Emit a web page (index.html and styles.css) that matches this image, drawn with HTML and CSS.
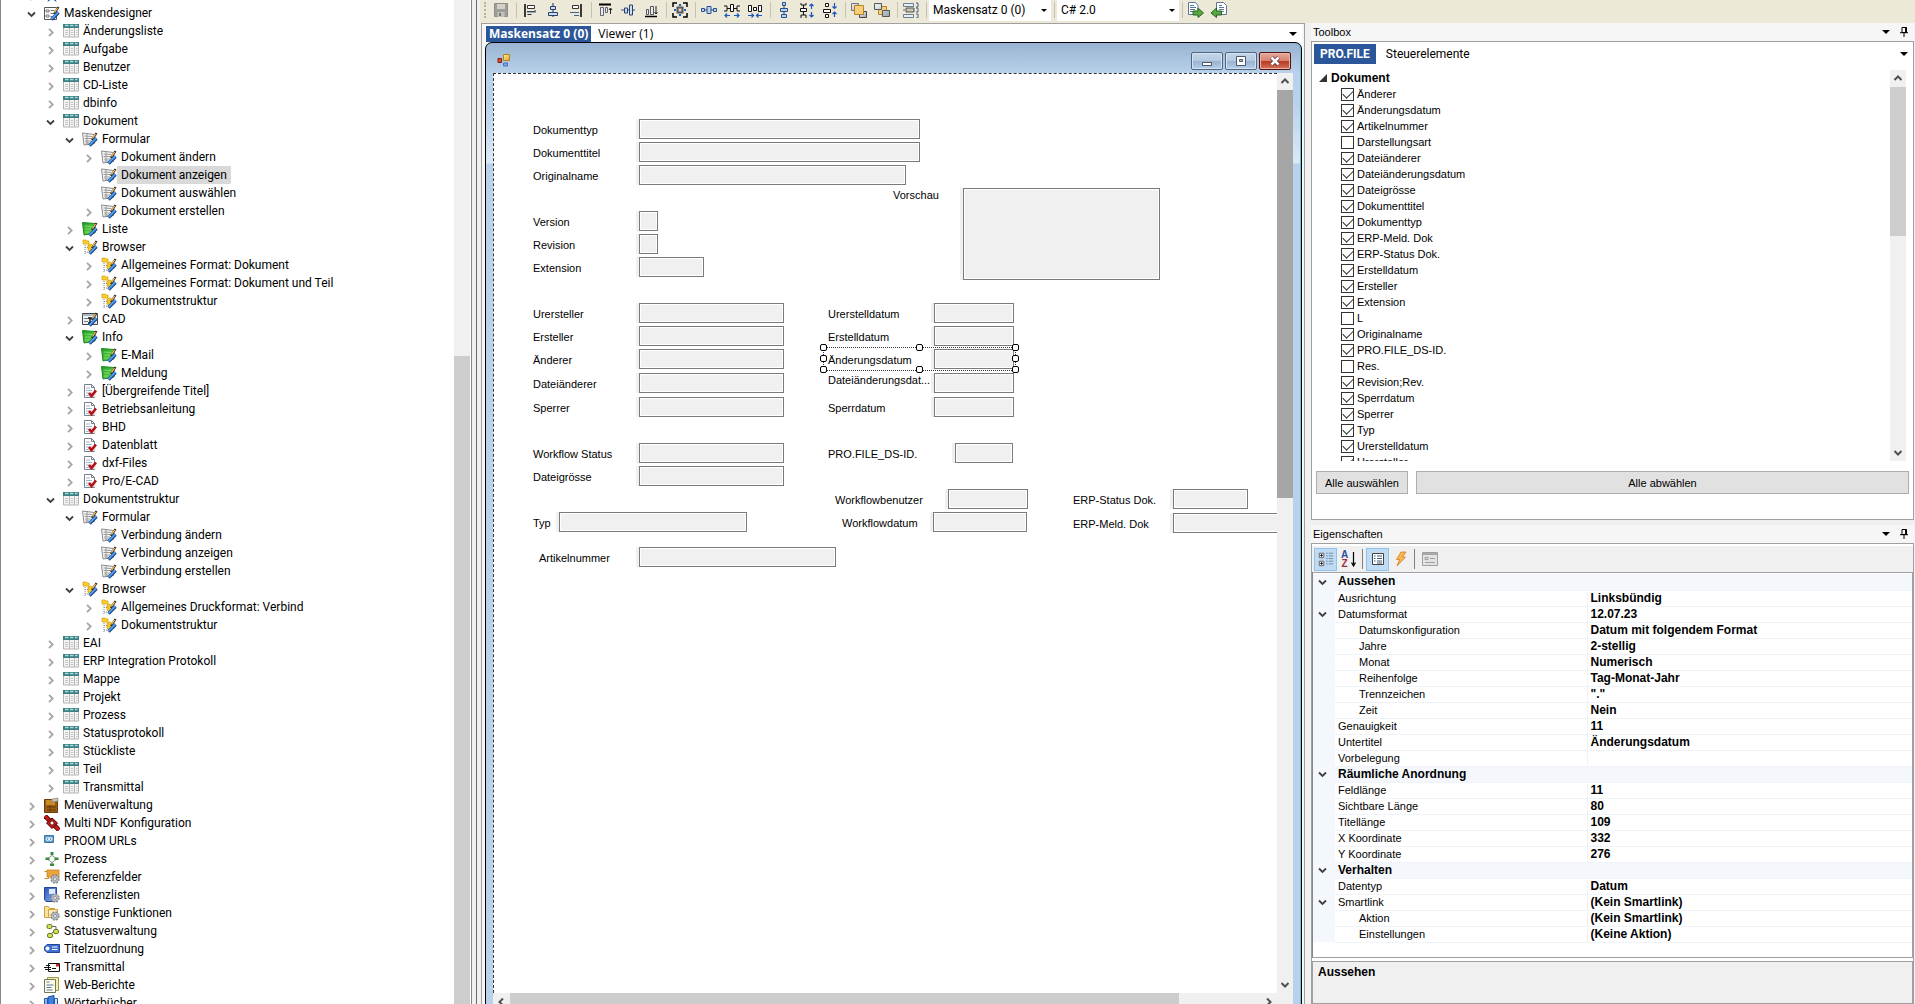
FILE: index.html
```
<!DOCTYPE html>
<html lang="de">
<head>
<meta charset="utf-8">
<title>Maskendesigner</title>
<link rel="stylesheet" href="styles.css">
</head>
<body>

<svg class="defs" aria-hidden="true">
  <defs>
    <linearGradient id="g-green" x1="0" y1="0" x2="1" y2="1"><stop offset="0" stop-color="#1f9a2a"/><stop offset="1" stop-color="#6fdc4a"/></linearGradient>
    <linearGradient id="g-blue" x1="0" y1="0" x2="1" y2="1"><stop offset="0" stop-color="#2a55b8"/><stop offset="1" stop-color="#8fb4ee"/></linearGradient>
    <linearGradient id="g-gold" x1="0" y1="0" x2="1" y2="1"><stop offset="0" stop-color="#fff0b0"/><stop offset="1" stop-color="#e0a020"/></linearGradient>
    <linearGradient id="g-gray" x1="0" y1="0" x2="1" y2="1"><stop offset="0" stop-color="#f4f6f8"/><stop offset="1" stop-color="#9aa4ac"/></linearGradient>
  </defs>
  <symbol id="pen" viewBox="0 0 16 16"><path d="M10 9l4.500-7" stroke="#3a2c18" stroke-width="2.200" fill="none"/><path d="M10.500 7.500l3-4.500" stroke="#f0c070" stroke-width="1.300"/><path d="M7.500 14.500l7-7" stroke="#17407f" stroke-width="3.400"/><path d="M7.500 14l7-7" stroke="#4f9cf0" stroke-width="1.800"/></symbol>
  <symbol id="gear" viewBox="0 0 10 10"><circle cx="5" cy="5" r="3.900" fill="#a9adb2" stroke="#7d8186" stroke-width="1.600" stroke-dasharray="1.800 1.260"/><circle cx="5" cy="5" r="3.500" fill="#b4b8bc"/><circle cx="5" cy="5" r="1.500" fill="#f4f4f4" stroke="#808488" stroke-width=".7"/></symbol>
  <symbol id="down" viewBox="0 0 9 9"><path d="M1 2.500l3.500 3.500L8 2.500" fill="none" stroke="#404040" stroke-width="1.800"/></symbol>
  <symbol id="right" viewBox="0 0 9 9"><path d="M3 0.800l3.700 3.700L3 8.200" fill="none" stroke="#a6a6a6" stroke-width="1.800"/></symbol>
  <symbol id="arrow" viewBox="0 0 10 10"><path d="M1.500 7L5 3.500 8.500 7" fill="none" stroke="#505050" stroke-width="2"/></symbol>

  <symbol id="star" viewBox="0 0 16 16"><path d="M8 1l2 5h5l-4 3.500L12.500 15 8 11.800 3.500 15 5 9.500 1 6h5z" fill="#2458c8"/></symbol>
  <symbol id="mask" viewBox="0 0 16 16"><path d="M.5 2.500h12v12H.5z" fill="#fff" stroke="#555"/><path d="M2 5h3v2H2zM2 10h3v2H2z" fill="none" stroke="#777"/><path d="M6.500 5.500h4M6.500 8.500h3M6.500 11.500h2" stroke="#777"/><use href="#pen"/></symbol>
  <symbol id="table" viewBox="0 0 16 14"><path d="M.5.500h15v12.500H.5z" fill="#f4f4f4" stroke="#b4b4b4"/><path d="M0 0h16v4H0z" fill="#3d7f85"/><path d="M2 1.500h3.500M7 1.500h3.500M12 1.500h2.500" stroke="#a9dce0" stroke-width="1.500"/><path d="M6.500 4v9M11.500 4v9" stroke="#b8b8b8"/><path d="M2 6.500h3M2 8.500h3M2 10.500h3M7.800 6.500h2.500M7.800 8.500h2.500M7.800 10.500h2.500M13 6.500h1.500M13 8.500h1.500M13 10.500h1.500" stroke="#c4c4c4"/></symbol>
  <symbol id="form" viewBox="0 0 16 16"><path d="M.5 2l12 1.500v9L2 14z" fill="#f6f6f6" stroke="#8a8a8a"/><path d="M2.500 5l8 .5M2.500 7.500h7.500M3 10h6M3.500 12h4M5 3v10" stroke="#9a9a9a"/><use href="#pen"/></symbol>
  <symbol id="green" viewBox="0 0 16 16"><path d="M.5 1.500L13 2.500v9.500L2 14z" fill="url(#g-green)" stroke="#1d8a22"/><path d="M2.500 5l8 .500M3 8h6M3 11h4" stroke="#9bec7a" stroke-width=".7"/><use href="#pen"/></symbol>
  <symbol id="browse" viewBox="0 0 16 16"><path d="M1 1h3l1 1h2v3H1z" fill="#f7cf2f" stroke="#d9a514" stroke-width=".8"/><path d="M3 6v9M3 8.500h3M3 13h3" stroke="#888" stroke-dasharray="1 1"/><path d="M6 6l3-1 3 2v3l-4 3-2-2z" fill="#f5c623" stroke="#cf9a10" stroke-width=".7"/><use href="#pen"/></symbol>
  <symbol id="cad" viewBox="0 0 16 16"><path d="M.5 2.500h15v11H.5z" fill="#eef2f4" stroke="#3c4650"/><path d="M0 4h16M2 7.500h4M2 10.500h4M10 7h4" stroke="#6f7f8a"/><path d="M6 7h4M8 7v5M6 12h4" stroke="#111" stroke-width="1.500"/><use href="#pen"/></symbol>
  <symbol id="doc" viewBox="0 0 16 16"><path d="M2.500 1.500h7l3 3v10h-10z" fill="#fff" stroke="#75808c"/><path d="M9.500 1.500v3h3" fill="none" stroke="#75808c"/><path d="M4 5h4M4 7.500h6M4 10h3M4 12.500h3" stroke="#9ab4cc"/><path d="M6.500 9h7v5h-7z" fill="#f3dada"/><path d="M7 10l2.500 3L14 7.500" fill="none" stroke="#b01018" stroke-width="2.600"/></symbol>
  <symbol id="menu" viewBox="0 0 16 16"><path d="M.5 2.500h13v13H.5z" fill="#9a5c14" stroke="#6b3d0a"/><path d="M2 3h9v5H2z" fill="#c98a2c"/><path d="M3 10h9M3 13h9M6 8v7" stroke="#6b3d0a"/><path d="M8 2l6-1v3l-6 1z" fill="#c8c4b4" stroke="#8a8678" stroke-width=".7"/></symbol>
  <symbol id="ndf" viewBox="0 0 16 16"><path d="M1 1l14 14" stroke="#400" stroke-width="4.600"/><path d="M1 1l14 14" stroke="#d01818" stroke-width="2.800"/><path d="M8 3l5.500 5L8 13.500 2.500 8z" fill="#d01818" stroke="#400"/><path d="M8 5.500L10.500 8 8 10.500 5.500 8z" fill="#fff" stroke="#400"/></symbol>
  <symbol id="url" viewBox="0 0 16 16"><path d="M.5 2.500h9v7h-9z" fill="#5b9bcb" stroke="#3b79ab"/><circle cx="3.600" cy="6" r="1.500" fill="none" stroke="#fff"/><circle cx="6.600" cy="6" r="1.500" fill="none" stroke="#fff"/></symbol>
  <symbol id="proc" viewBox="0 0 16 16"><path d="M8 3v2M8 11v3M3 8l5-3.500L13 8l-5 3.500z" fill="none" stroke="#8aa08a"/><path d="M6.500 1h3v3h-3zM1.500 6.500h4v2.500h-4zM10.500 6.500h4v2.500h-4zM6 12.500h4V15H6z" fill="#2f8f3a"/></symbol>
  <symbol id="reff" viewBox="0 0 16 16"><path d="M.5 2.500h4v7h-4" fill="none" stroke="#d08a20"/><path d="M3 1h12v7H3z" fill="#eda43a" stroke="#c98420" stroke-width=".8"/><use href="#gear" x="6" y="5" width="10" height="10"/></symbol>
  <symbol id="refl" viewBox="0 0 16 16"><path d="M.5.500h12v14H2l-1.500-2z" fill="url(#g-blue)" stroke="#2346a0"/><path d="M5 2h6v5H5z" fill="#dfe9fb"/><use href="#gear" x="6" y="6" width="10" height="10"/></symbol>
  <symbol id="func" viewBox="0 0 16 16"><path d="M.5 1.500h4l1 2h5v9H.5z" fill="#fbe29a" stroke="#d2a23a"/><path d="M4.500 4.500h9v8h-9z" fill="#fceebc" stroke="#d2a23a"/><use href="#gear" x="6" y="6" width="10" height="10"/></symbol>
  <symbol id="stat" viewBox="0 0 16 16"><path d="M6 3.500h6v3M5 12l6-4" fill="none" stroke="#666"/><g fill="#d2e05a" stroke="#6f7a1c"><rect x="3" y="1.500" width="5" height="4" rx="1.500"/><rect x="9.500" y="6.500" width="5" height="4" rx="1.500"/><rect x="3.500" y="10.500" width="5" height="4" rx="1.500"/></g></symbol>
  <symbol id="title" viewBox="0 0 16 16"><path d="M3 3.500h12.500v8H3L.5 9V6z" fill="#3f6fd0" stroke="#23459c"/><circle cx="3.500" cy="7.500" r="2" fill="#fff"/><path d="M8 6h5.500M8 8.500h5.500" stroke="#fff"/></symbol>
  <symbol id="trans" viewBox="0 0 16 16"><path d="M4.500 4.500h11v8h-11z" fill="#fff" stroke="#111"/><path d="M0 8.500h7M1 10.500h6M2 6.500h4M8 9.500h4" stroke="#111"/><path d="M12 5h3v2.500h-3z" fill="#c22"/></symbol>
  <symbol id="web" viewBox="0 0 16 16"><path d="M3.500.500h11v13h-11z" fill="#f3eeb0" stroke="#9a9448"/><path d="M.5 2.500h11v13H.5z" fill="#fbfbe6" stroke="#6f7a50"/><path d="M2.500 5h3M2.500 8h7M2.500 10.500h5M2.500 13h6" stroke="#5878b0"/></symbol>
  <symbol id="books" viewBox="0 0 16 16"><path d="M.5 3.500h3v12h-3z" fill="#8ab6f0" stroke="#2b57a8"/><path d="M4 2l6-1.500v15H4z" fill="#3f80e0" stroke="#214f9e"/><path d="M10.500 3.500h3v12h-3z" fill="#cfe2fb" stroke="#2b57a8"/></symbol>

  <symbol id="t-save" viewBox="0 0 16 16"><path d="M1.500 1.500h13v13h-13z" fill="#9d9d9a" stroke="#8c8c88"/><path d="M4 2h8v5H4z" fill="#d4d2c8"/><path d="M4.500 10h7v5h-7z" fill="#c4c2b8"/><path d="M6 11h2v3H6z" fill="#777"/></symbol>
  <symbol id="t-left" viewBox="0 0 16 16"><path d="M3 2v13" stroke="#000" stroke-width="1.500"/><path d="M5.500 3.500h7v3h-7z" fill="#fff" stroke="#333"/><path d="M5 9.500h8v-1.500M5.500 12.500h4" fill="none" stroke="#333"/><path d="M14 10H5" stroke="#44628e"/></symbol>
  <symbol id="t-center" viewBox="0 0 16 16"><path d="M8 1v14" stroke="#2c4f88" stroke-width="1.200"/><path d="M5.500 4.500h5v3h-5zM3.500 10.500h9v3h-9z" fill="#cfdcf2" stroke="#26416e"/></symbol>
  <symbol id="t-right" viewBox="0 0 16 16"><path d="M13 2v13" stroke="#000" stroke-width="1.500"/><path d="M4.500 3.500h6v3h-6z" fill="#fff" stroke="#333"/><path d="M2 10.500h9M6 13.500h5" stroke="#44628e"/></symbol>
  <symbol id="t-top" viewBox="0 0 16 16"><path d="M2 2.500h12" stroke="#000" stroke-width="2"/><path d="M3.500 5.500h3v8h-3zM8.500 5.500h2v5h-2z" fill="#e2ecfa" stroke="#666"/><path d="M13.500 12V6M12 8l1.500-2L15 8" fill="none" stroke="#222"/></symbol>
  <symbol id="t-mid" viewBox="0 0 16 16"><path d="M1 8h14" stroke="#2c4f88"/><path d="M4.500 6h3v5h-3zM9.500 3h3v10h-3z" fill="#cfdcf2" stroke="#26416e"/></symbol>
  <symbol id="t-bot" viewBox="0 0 16 16"><path d="M2 14.500h12" stroke="#000" stroke-width="1.500"/><path d="M3.500 7.500h2v5h-2zM7.500 4.500h3v8h-3z" fill="#e2ecfa" stroke="#555"/><path d="M13 4v8M11.500 10l1.500 2 1.500-2" fill="none" stroke="#222"/></symbol>
  <symbol id="t-size" viewBox="0 0 16 16"><path d="M1 5V1h4M11 1h4v4M15 11v4h-4M5 15H1v-4" fill="none" stroke="#000" stroke-width="1.500"/><path d="M5.500 5.500h5v5h-5z" fill="#d8d4c0" stroke="#555" stroke-width="2"/><path d="M8 2v2M8 12v2M2 8h2M12 8h2" stroke="#2a62c0" stroke-width="2.200"/></symbol>
  <symbol id="t-h" viewBox="0 0 16 16"><path d="M3 8h10" stroke="#26416e"/><path d="M.5 6.500h3v3h-3zM6 4.500h4v7H6zM12.500 6.500h3v3h-3z" fill="#bcd0f0" stroke="#26518e"/></symbol>
  <symbol id="t-hp" viewBox="0 0 16 16"><path d="M0 4h3v5H0M16 4h-3v5h3" fill="none" stroke="#111"/><path d="M3 6.500h10" stroke="#111"/><path d="M6.500 2.500h3v7h-3z" fill="#fff" stroke="#111"/><path d="M1 13.500h5M10 13.500h5M3 11.500l-2 2 2 2M13 11.500l2 2-2 2" fill="none" stroke="#1c55c4" stroke-width="1.200"/></symbol>
  <symbol id="t-hm" viewBox="0 0 16 16"><path d="M1.500 3.500h3v6h-3zM6.500 5.500h3v3h-3zM11.500 3.500h3v6h-3z" fill="#fff" stroke="#111"/><path d="M1 13.500h5M10 13.500h5M4.500 11.500l2 2-2 2M11.500 11.500l-2 2 2 2" fill="none" stroke="#1c55c4" stroke-width="1.200"/></symbol>
  <symbol id="t-v" viewBox="0 0 16 16"><path d="M8 2v12" stroke="#26416e"/><path d="M6.500.500h3v3h-3zM4.500 6.500h7v3h-7zM5.500 12.500h5v3h-5z" fill="#bcd0f0" stroke="#26518e"/></symbol>
  <symbol id="t-vp" viewBox="0 0 16 16"><path d="M2 1v2h5V1M2 16v-3h5v3M4.500 3v10" fill="none" stroke="#111"/><path d="M1.500 6.500h6v3h-6z" fill="#fff" stroke="#111"/><path d="M12.500 2v5M12.500 10v5M10.500 4l2-2 2 2M10.500 13l2 2 2-2" fill="none" stroke="#1c55c4" stroke-width="1.200"/></symbol>
  <symbol id="t-vm" viewBox="0 0 16 16"><path d="M3.500 1.500h3v3h-3zM1.500 7.500h7v3h-7zM3.500 12.500h3v3h-3z" fill="#fff" stroke="#111"/><path d="M12.500 1v5M12.500 10v5M10.500 4.500l2 2 2-2M10.500 12l2-2 2 2" fill="none" stroke="#1c55c4" stroke-width="1.200"/></symbol>
  <symbol id="t-front" viewBox="0 0 16 16"><path d="M.5 1.500h7v7h-7z" fill="url(#g-gray)" stroke="#777"/><path d="M8.500 9.500h7v6h-7z" fill="url(#g-gray)" stroke="#444"/><path d="M3.500 3.500h9v9h-9z" fill="#f7cf7a" stroke="#b98222"/></symbol>
  <symbol id="t-back" viewBox="0 0 16 16"><path d="M4.500 4.500h8v8h-8z" fill="#f7cf7a" stroke="#b98222"/><path d="M.5 1.500h7v6h-7zM8.500 8.500h7v6h-7z" fill="url(#g-gray)" stroke="#555"/></symbol>
  <symbol id="t-tab" viewBox="0 0 16 16"><path d="M.5 1.500h10v3H.5zM.5 12.500h10v3H.5z" fill="#e6edf5" stroke="#6d7c90"/><path d="M3 6h8v4H3z" fill="#c8c4b4" stroke="#555"/><path d="M13 1h2v4h-2M13 6h2v4h-2M13 12h2v4h-2M0 8h2" fill="none" stroke="#44628e"/></symbol>
  <symbol id="t-out" viewBox="0 0 16 16"><path d="M.5.500h7l2.500 3v9H.5z" fill="#fff" stroke="#5a7896"/><path d="M2 3.500h4M2 5.500h6M2 7.500h5M2 9.500h4" stroke="#5a7896"/><path d="M5 9h5V6l5.500 5-5.500 4.500V13H5z" fill="#57a845" stroke="#26661c"/></symbol>
  <symbol id="t-in" viewBox="0 0 16 16"><path d="M5.500.500h7l3 3v9h-10z" fill="#fff" stroke="#5a7896"/><path d="M8 3.500h3M8 5.500h5M8 7.500h5M10 9.500h3" stroke="#5a7896"/><path d="M10.500 9h-5V6L0 11l5.500 4.500V13h5z" fill="#57a845" stroke="#26661c"/></symbol>
  <symbol id="app" viewBox="0 0 14 14"><path d="M6.500 1.500h6v6h-6z" fill="url(#g-gold)" stroke="#b88410"/><path d="M1 5.500h3.500v4H1z" fill="#e05030" stroke="#8c1c10"/><path d="M6.500 10h4v3h-4z" fill="#7ea4e8" stroke="#4a70c0"/></symbol>
  <symbol id="pin" viewBox="0 0 10 10"><path d="M3 .5h4.500v5H3zM1 5.700h8M5 6v4" fill="none" stroke="#000"/><path d="M6.800.500v5" stroke="#000" stroke-width="1.500"/></symbol>
  <symbol id="caret" viewBox="0 0 8 4"><path d="M0 0h8L4 4z"/></symbol>
  <symbol id="p-cat" viewBox="0 0 18 18"><path d="M1.500 2.500h5v5h-5zM1.500 11.500h5v5h-5z" fill="#fff" stroke="#555"/><path d="M2.500 5h3M4 3.500v3M2.500 14h3M4 12.500v3" stroke="#000"/><path d="M9 2.500h2M9 5.500h2M9 8.500h2M9 11.500h2M9 14.500h2M12 2.500h5M12 5.500h5M12 8.500h5M12 11.500h5M12 14.500h5" stroke="#6a86a8"/></symbol>
  <symbol id="p-down" viewBox="0 0 4 16"><path d="M2 1v13M0 11.500L2 15l2-3.500" fill="none" stroke="#000" stroke-width="1.200"/></symbol>
  <symbol id="p-prop" viewBox="0 0 16 16"><path d="M2.500 2.500h11v11h-11z" fill="#fff" stroke="#444"/><path d="M4 5h1.500M4 7.500h1.500M4 10h1.500M7 5h5M7 7.500h5M7 10h5M7 12h5" stroke="#3d5878"/></symbol>
  <symbol id="p-event" viewBox="0 0 16 16"><path d="M8 1h5L9.500 6h3L4 15l2.500-6.500H3.500z" fill="#f7b64a" stroke="#d87a28" stroke-width=".8"/></symbol>
  <symbol id="p-page" viewBox="0 0 16 16"><path d="M.5 1.500h15v13H.5z" fill="#e2e2e2" stroke="#a0a0a0"/><path d="M1 3h14" stroke="#a8a8a8" stroke-width="2"/><path d="M3 6.500h3v2H3zM3 11.500h10M8 7.500h5" fill="none" stroke="#a0a0a0"/></symbol>
</svg>

<nav class="tree-pane">
  <ul class="tree">
    <li class="l1"><svg class="chev"><use href="#right"/></svg><svg class="ico"><use href="#star"/></svg></li>
    <li class="l1"><svg class="chev"><use href="#down"/></svg><svg class="ico"><use href="#mask"/></svg><span>Maskendesigner</span></li>
    <li class="l2"><svg class="chev"><use href="#right"/></svg><svg class="ico"><use href="#table"/></svg><span>Änderungsliste</span></li>
    <li class="l2"><svg class="chev"><use href="#right"/></svg><svg class="ico"><use href="#table"/></svg><span>Aufgabe</span></li>
    <li class="l2"><svg class="chev"><use href="#right"/></svg><svg class="ico"><use href="#table"/></svg><span>Benutzer</span></li>
    <li class="l2"><svg class="chev"><use href="#right"/></svg><svg class="ico"><use href="#table"/></svg><span>CD-Liste</span></li>
    <li class="l2"><svg class="chev"><use href="#right"/></svg><svg class="ico"><use href="#table"/></svg><span>dbinfo</span></li>
    <li class="l2"><svg class="chev"><use href="#down"/></svg><svg class="ico"><use href="#table"/></svg><span>Dokument</span></li>
    <li class="l3"><svg class="chev"><use href="#down"/></svg><svg class="ico"><use href="#form"/></svg><span>Formular</span></li>
    <li class="l4"><svg class="chev"><use href="#right"/></svg><svg class="ico"><use href="#form"/></svg><span>Dokument ändern</span></li>
    <li class="l4"><svg class="chev"></svg><svg class="ico"><use href="#form"/></svg><span class="selected">Dokument anzeigen</span></li>
    <li class="l4"><svg class="chev"></svg><svg class="ico"><use href="#form"/></svg><span>Dokument auswählen</span></li>
    <li class="l4"><svg class="chev"><use href="#right"/></svg><svg class="ico"><use href="#form"/></svg><span>Dokument erstellen</span></li>
    <li class="l3"><svg class="chev"><use href="#right"/></svg><svg class="ico"><use href="#green"/></svg><span>Liste</span></li>
    <li class="l3"><svg class="chev"><use href="#down"/></svg><svg class="ico"><use href="#browse"/></svg><span>Browser</span></li>
    <li class="l4"><svg class="chev"><use href="#right"/></svg><svg class="ico"><use href="#browse"/></svg><span>Allgemeines Format: Dokument</span></li>
    <li class="l4"><svg class="chev"><use href="#right"/></svg><svg class="ico"><use href="#browse"/></svg><span>Allgemeines Format: Dokument und Teil</span></li>
    <li class="l4"><svg class="chev"><use href="#right"/></svg><svg class="ico"><use href="#browse"/></svg><span>Dokumentstruktur</span></li>
    <li class="l3"><svg class="chev"><use href="#right"/></svg><svg class="ico"><use href="#cad"/></svg><span>CAD</span></li>
    <li class="l3"><svg class="chev"><use href="#down"/></svg><svg class="ico"><use href="#green"/></svg><span>Info</span></li>
    <li class="l4"><svg class="chev"><use href="#right"/></svg><svg class="ico"><use href="#green"/></svg><span>E-Mail</span></li>
    <li class="l4"><svg class="chev"><use href="#right"/></svg><svg class="ico"><use href="#green"/></svg><span>Meldung</span></li>
    <li class="l3"><svg class="chev"><use href="#right"/></svg><svg class="ico"><use href="#doc"/></svg><span>[Übergreifende Titel]</span></li>
    <li class="l3"><svg class="chev"><use href="#right"/></svg><svg class="ico"><use href="#doc"/></svg><span>Betriebsanleitung</span></li>
    <li class="l3"><svg class="chev"><use href="#right"/></svg><svg class="ico"><use href="#doc"/></svg><span>BHD</span></li>
    <li class="l3"><svg class="chev"><use href="#right"/></svg><svg class="ico"><use href="#doc"/></svg><span>Datenblatt</span></li>
    <li class="l3"><svg class="chev"><use href="#right"/></svg><svg class="ico"><use href="#doc"/></svg><span>dxf-Files</span></li>
    <li class="l3"><svg class="chev"><use href="#right"/></svg><svg class="ico"><use href="#doc"/></svg><span>Pro/E-CAD</span></li>
    <li class="l2"><svg class="chev"><use href="#down"/></svg><svg class="ico"><use href="#table"/></svg><span>Dokumentstruktur</span></li>
    <li class="l3"><svg class="chev"><use href="#down"/></svg><svg class="ico"><use href="#form"/></svg><span>Formular</span></li>
    <li class="l4"><svg class="chev"></svg><svg class="ico"><use href="#form"/></svg><span>Verbindung ändern</span></li>
    <li class="l4"><svg class="chev"></svg><svg class="ico"><use href="#form"/></svg><span>Verbindung anzeigen</span></li>
    <li class="l4"><svg class="chev"></svg><svg class="ico"><use href="#form"/></svg><span>Verbindung erstellen</span></li>
    <li class="l3"><svg class="chev"><use href="#down"/></svg><svg class="ico"><use href="#browse"/></svg><span>Browser</span></li>
    <li class="l4"><svg class="chev"><use href="#right"/></svg><svg class="ico"><use href="#browse"/></svg><span>Allgemeines Druckformat: Verbind</span></li>
    <li class="l4"><svg class="chev"><use href="#right"/></svg><svg class="ico"><use href="#browse"/></svg><span>Dokumentstruktur</span></li>
    <li class="l2"><svg class="chev"><use href="#right"/></svg><svg class="ico"><use href="#table"/></svg><span>EAI</span></li>
    <li class="l2"><svg class="chev"><use href="#right"/></svg><svg class="ico"><use href="#table"/></svg><span>ERP Integration Protokoll</span></li>
    <li class="l2"><svg class="chev"><use href="#right"/></svg><svg class="ico"><use href="#table"/></svg><span>Mappe</span></li>
    <li class="l2"><svg class="chev"><use href="#right"/></svg><svg class="ico"><use href="#table"/></svg><span>Projekt</span></li>
    <li class="l2"><svg class="chev"><use href="#right"/></svg><svg class="ico"><use href="#table"/></svg><span>Prozess</span></li>
    <li class="l2"><svg class="chev"><use href="#right"/></svg><svg class="ico"><use href="#table"/></svg><span>Statusprotokoll</span></li>
    <li class="l2"><svg class="chev"><use href="#right"/></svg><svg class="ico"><use href="#table"/></svg><span>Stückliste</span></li>
    <li class="l2"><svg class="chev"><use href="#right"/></svg><svg class="ico"><use href="#table"/></svg><span>Teil</span></li>
    <li class="l2"><svg class="chev"><use href="#right"/></svg><svg class="ico"><use href="#table"/></svg><span>Transmittal</span></li>
    <li class="l1"><svg class="chev"><use href="#right"/></svg><svg class="ico"><use href="#menu"/></svg><span>Menüverwaltung</span></li>
    <li class="l1"><svg class="chev"><use href="#right"/></svg><svg class="ico"><use href="#ndf"/></svg><span>Multi NDF Konfiguration</span></li>
    <li class="l1"><svg class="chev"><use href="#right"/></svg><svg class="ico"><use href="#url"/></svg><span>PROOM URLs</span></li>
    <li class="l1"><svg class="chev"><use href="#right"/></svg><svg class="ico"><use href="#proc"/></svg><span>Prozess</span></li>
    <li class="l1"><svg class="chev"><use href="#right"/></svg><svg class="ico"><use href="#reff"/></svg><span>Referenzfelder</span></li>
    <li class="l1"><svg class="chev"><use href="#right"/></svg><svg class="ico"><use href="#refl"/></svg><span>Referenzlisten</span></li>
    <li class="l1"><svg class="chev"><use href="#right"/></svg><svg class="ico"><use href="#func"/></svg><span>sonstige Funktionen</span></li>
    <li class="l1"><svg class="chev"><use href="#right"/></svg><svg class="ico"><use href="#stat"/></svg><span>Statusverwaltung</span></li>
    <li class="l1"><svg class="chev"><use href="#right"/></svg><svg class="ico"><use href="#title"/></svg><span>Titelzuordnung</span></li>
    <li class="l1"><svg class="chev"><use href="#right"/></svg><svg class="ico"><use href="#trans"/></svg><span>Transmittal</span></li>
    <li class="l1"><svg class="chev"><use href="#right"/></svg><svg class="ico"><use href="#web"/></svg><span>Web-Berichte</span></li>
    <li class="l1"><svg class="chev"><use href="#right"/></svg><svg class="ico"><use href="#books"/></svg><span>Wörterbücher</span></li>
  </ul>
  <div class="tree-scroll"><div class="thumb"></div></div>
</nav>
<div class="splitter"></div>

<main class="workbench">
  <div class="toolbar">
    <i class="grip"></i>
    <button class="tool" title="Speichern"><svg><use href="#t-save"/></svg></button>
    <i class="sep"></i>
    <button class="tool" title="Links ausrichten"><svg><use href="#t-left"/></svg></button>
    <button class="tool" title="Zentrieren"><svg><use href="#t-center"/></svg></button>
    <button class="tool" title="Rechts ausrichten"><svg><use href="#t-right"/></svg></button>
    <i class="sep"></i>
    <button class="tool" title="Oben ausrichten"><svg><use href="#t-top"/></svg></button>
    <button class="tool" title="Mittig ausrichten"><svg><use href="#t-mid"/></svg></button>
    <button class="tool" title="Unten ausrichten"><svg><use href="#t-bot"/></svg></button>
    <i class="sep"></i>
    <button class="tool" title="Gleiche Grösse"><svg><use href="#t-size"/></svg></button>
    <i class="sep"></i>
    <button class="tool" title="Abstand horizontal"><svg><use href="#t-h"/></svg></button>
    <button class="tool" title="Abstand vergrössern"><svg><use href="#t-hp"/></svg></button>
    <button class="tool" title="Abstand verkleinern"><svg><use href="#t-hm"/></svg></button>
    <i class="sep"></i>
    <button class="tool" title="Abstand vertikal"><svg><use href="#t-v"/></svg></button>
    <button class="tool" title="Abstand vergrössern"><svg><use href="#t-vp"/></svg></button>
    <button class="tool" title="Abstand verkleinern"><svg><use href="#t-vm"/></svg></button>
    <i class="sep"></i>
    <button class="tool" title="In den Vordergrund"><svg><use href="#t-front"/></svg></button>
    <button class="tool" title="In den Hintergrund"><svg><use href="#t-back"/></svg></button>
    <i class="sep"></i>
    <button class="tool" title="Reihenfolge"><svg><use href="#t-tab"/></svg></button>
    <i class="sep"></i>
    <span class="combo"><select aria-label="Maskensatz"><option>Maskensatz 0 (0)</option></select><svg><use href="#caret"/></svg></span>
    <i class="sep"></i>
    <span class="combo"><select aria-label="Sprache"><option>C# 2.0</option></select><svg><use href="#caret"/></svg></span>
    <i class="sep"></i>
    <button class="tool" title="Exportieren"><svg><use href="#t-out"/></svg></button>
    <button class="tool" title="Importieren"><svg><use href="#t-in"/></svg></button>
  </div>

  <div class="panes">
    <section class="documents">
      <div class="doc-tabs">
        <button class="doc-tab active">Maskensatz 0 (0)</button>
        <button class="doc-tab">Viewer (1)</button>
        <svg class="caret"><use href="#caret"/></svg>
      </div>
      <div class="mdi">
        <div class="mdi-title">
          <svg class="app-icon"><use href="#app"/></svg>
          <button class="win-btn" aria-label="Minimieren"><svg viewBox="0 0 12 12"><path d="M1.500 7.500h9v3h-9z" fill="#fff" stroke="#4a5868"/></svg></button>
          <button class="win-btn" aria-label="Maximieren"><svg viewBox="0 0 12 12"><path d="M1.500 1.500h9v9h-9z" fill="#fff" stroke="#4a5868"/><path d="M4.500 4.500h3v2h-3z" fill="#a8c0dc" stroke="#4a5868"/></svg></button>
          <button class="win-btn close" aria-label="Schliessen"><svg viewBox="0 0 12 12"><path d="M2.500 2.500l7 7M9.500 2.500l-7 7" stroke="#5a3038" stroke-width="4"/><path d="M2.500 2.500l7 7M9.500 2.500l-7 7" stroke="#fff" stroke-width="2.500"/></svg></button>
        </div>
        <div class="client">
          <div class="canvas">
            <div class="field f-dokumenttyp"><label for="dokumenttyp">Dokumenttyp</label><input id="dokumenttyp"></div>
            <div class="field f-dokumenttitel"><label for="dokumenttitel">Dokumenttitel</label><input id="dokumenttitel"></div>
            <div class="field f-originalname"><label for="originalname">Originalname</label><input id="originalname"></div>
            <div class="field f-vorschau"><label for="vorschau">Vorschau</label><textarea id="vorschau"></textarea></div>
            <div class="field f-version"><label for="version">Version</label><input id="version"></div>
            <div class="field f-revision"><label for="revision">Revision</label><input id="revision"></div>
            <div class="field f-extension"><label for="extension">Extension</label><input id="extension"></div>
            <div class="field f-urersteller"><label for="urersteller">Urersteller</label><input id="urersteller"></div>
            <div class="field f-ersteller"><label for="ersteller">Ersteller</label><input id="ersteller"></div>
            <div class="field f-aenderer"><label for="aenderer">Änderer</label><input id="aenderer"></div>
            <div class="field f-dateiaenderer"><label for="dateiaenderer">Dateiänderer</label><input id="dateiaenderer"></div>
            <div class="field f-sperrer"><label for="sperrer">Sperrer</label><input id="sperrer"></div>
            <div class="field f-urerstelldatum"><label for="urerstelldatum">Urerstelldatum</label><input id="urerstelldatum"></div>
            <div class="field f-erstelldatum"><label for="erstelldatum">Erstelldatum</label><input id="erstelldatum"></div>
            <div class="field f-aenderungsdatum"><label for="aenderungsdatum">Änderungsdatum</label><input id="aenderungsdatum"></div>
            <div class="field f-dateidatum"><label for="dateidatum">Dateiänderungsdat...</label><input id="dateidatum"></div>
            <div class="field f-sperrdatum"><label for="sperrdatum">Sperrdatum</label><input id="sperrdatum"></div>
            <div class="field f-wfstatus"><label for="wfstatus">Workflow Status</label><input id="wfstatus"></div>
            <div class="field f-dateigroesse"><label for="dateigroesse">Dateigrösse</label><input id="dateigroesse"></div>
            <div class="field f-dsid"><label for="dsid">PRO.FILE_DS-ID.</label><input id="dsid"></div>
            <div class="field f-wfbenutzer"><label for="wfbenutzer">Workflowbenutzer</label><input id="wfbenutzer"></div>
            <div class="field f-wfdatum"><label for="wfdatum">Workflowdatum</label><input id="wfdatum"></div>
            <div class="field f-erpstatus"><label for="erpstatus">ERP-Status Dok.</label><input id="erpstatus"></div>
            <div class="field f-erpmeld"><label for="erpmeld">ERP-Meld. Dok</label><input id="erpmeld"></div>
            <div class="field f-typ"><label for="typ">Typ</label><input id="typ"></div>
            <div class="field f-artikelnummer"><label for="artikelnummer">Artikelnummer</label><input id="artikelnummer"></div>
            <div class="selection">
              <i></i><i></i><i></i>
              <i></i><b></b><i></i>
              <i></i><i></i><i></i>
            </div>
          </div>
          <div class="vscroll dark">
            <svg><use href="#arrow"/></svg><div class="thumb"></div><svg class="flip"><use href="#arrow"/></svg>
          </div>
          <div class="hscroll">
            <svg class="turn-left"><use href="#arrow"/></svg><div class="thumb"></div><svg class="turn-right"><use href="#arrow"/></svg>
          </div>
          <div class="corner"></div>
        </div>
      </div>
    </section>

    <aside class="side">
      <section class="panel toolbox">
        <header class="panel-head"><h2>Toolbox</h2><svg class="caret"><use href="#caret"/></svg><svg class="pin"><use href="#pin"/></svg></header>
        <div class="panel-body">
          <div class="box-tabs">
            <button class="box-tab active">PRO.FILE</button>
            <button class="box-tab">Steuerelemente</button>
            <svg class="caret"><use href="#caret"/></svg>
          </div>
          <div class="checks">
            <div class="check-list">
              <h3>Dokument</h3>
              <label><input type="checkbox" checked>Änderer</label>
              <label><input type="checkbox" checked>Änderungsdatum</label>
              <label><input type="checkbox" checked>Artikelnummer</label>
              <label><input type="checkbox">Darstellungsart</label>
              <label><input type="checkbox" checked>Dateiänderer</label>
              <label><input type="checkbox" checked>Dateiänderungsdatum</label>
              <label><input type="checkbox" checked>Dateigrösse</label>
              <label><input type="checkbox" checked>Dokumenttitel</label>
              <label><input type="checkbox" checked>Dokumenttyp</label>
              <label><input type="checkbox" checked>ERP-Meld. Dok</label>
              <label><input type="checkbox" checked>ERP-Status Dok.</label>
              <label><input type="checkbox" checked>Erstelldatum</label>
              <label><input type="checkbox" checked>Ersteller</label>
              <label><input type="checkbox" checked>Extension</label>
              <label><input type="checkbox">L</label>
              <label><input type="checkbox" checked>Originalname</label>
              <label><input type="checkbox" checked>PRO.FILE_DS-ID.</label>
              <label><input type="checkbox">Res.</label>
              <label><input type="checkbox" checked>Revision;Rev.</label>
              <label><input type="checkbox" checked>Sperrdatum</label>
              <label><input type="checkbox" checked>Sperrer</label>
              <label><input type="checkbox" checked>Typ</label>
              <label><input type="checkbox" checked>Urerstelldatum</label>
              <label><input type="checkbox" checked>Urersteller</label>
            </div>
            <div class="vscroll">
              <svg><use href="#arrow"/></svg><div class="thumb"></div><svg class="flip"><use href="#arrow"/></svg>
            </div>
          </div>
          <div class="box-buttons">
            <button class="push">Alle auswählen</button>
            <button class="push wide">Alle abwählen</button>
          </div>
        </div>
      </section>

      <section class="panel">
        <header class="panel-head"><h2>Eigenschaften</h2><svg class="caret"><use href="#caret"/></svg><svg class="pin"><use href="#pin"/></svg></header>
        <div class="panel-body props">
          <div class="prop-tools">
            <button class="on" title="Kategorisiert"><svg><use href="#p-cat"/></svg></button>
            <button title="Alphabetisch"><span class="az"><b>A</b><b>Z</b></span><svg class="az-arrow"><use href="#p-down"/></svg></button>
            <i></i>
            <button class="on" title="Eigenschaften"><svg><use href="#p-prop"/></svg></button>
            <button title="Ereignisse"><svg><use href="#p-event"/></svg></button>
            <i></i>
            <button title="Eigenschaftenseiten"><svg><use href="#p-page"/></svg></button>
          </div>
          <div class="prop-grid">
            <table>
              <colgroup><col class="c-gutter"><col class="c-name"><col></colgroup>
              <tr class="cat"><td><svg class="chev"><use href="#down"/></svg></td><th colspan="2">Aussehen</th></tr>
              <tr><td></td><td>Ausrichtung</td><td>Linksbündig</td></tr>
              <tr><td><svg class="chev"><use href="#down"/></svg></td><td>Datumsformat</td><td>12.07.23</td></tr>
              <tr class="sub"><td></td><td>Datumskonfiguration</td><td>Datum mit folgendem Format</td></tr>
              <tr class="sub"><td></td><td>Jahre</td><td>2-stellig</td></tr>
              <tr class="sub"><td></td><td>Monat</td><td>Numerisch</td></tr>
              <tr class="sub"><td></td><td>Reihenfolge</td><td>Tag-Monat-Jahr</td></tr>
              <tr class="sub"><td></td><td>Trennzeichen</td><td>"."</td></tr>
              <tr class="sub"><td></td><td>Zeit</td><td>Nein</td></tr>
              <tr><td></td><td>Genauigkeit</td><td>11</td></tr>
              <tr><td></td><td>Untertitel</td><td>Änderungsdatum</td></tr>
              <tr><td></td><td>Vorbelegung</td><td></td></tr>
              <tr class="cat"><td><svg class="chev"><use href="#down"/></svg></td><th colspan="2">Räumliche Anordnung</th></tr>
              <tr><td></td><td>Feldlänge</td><td>11</td></tr>
              <tr><td></td><td>Sichtbare Länge</td><td>80</td></tr>
              <tr><td></td><td>Titellänge</td><td>109</td></tr>
              <tr><td></td><td>X Koordinate</td><td>332</td></tr>
              <tr><td></td><td>Y Koordinate</td><td>276</td></tr>
              <tr class="cat"><td><svg class="chev"><use href="#down"/></svg></td><th colspan="2">Verhalten</th></tr>
              <tr><td></td><td>Datentyp</td><td>Datum</td></tr>
              <tr><td><svg class="chev"><use href="#down"/></svg></td><td>Smartlink</td><td>(Kein Smartlink)</td></tr>
              <tr class="sub"><td></td><td>Aktion</td><td>(Kein Smartlink)</td></tr>
              <tr class="sub"><td></td><td>Einstellungen</td><td>(Keine Aktion)</td></tr>
            </table>
          </div>
          <div class="prop-help">Aussehen</div>
        </div>
      </section>
    </aside>
  </div>
</main>

</body>
</html>
```
FILE: styles.css
```
* { box-sizing: border-box; }

body {
  margin: 0;
  height: 100vh;
  display: flex;
  overflow: hidden;
  background: #f0f0f0;
  color: #000;
  font: 11px/16px "Liberation Sans", Arial, sans-serif;
}
button, input, select, textarea { font: inherit; color: inherit; border-radius: 0; margin: 0; }
h2, h3 { margin: 0; font-size: inherit; }
svg { display: block; flex: none; }
.defs { position: absolute; width: 0; height: 0; }

/* tree */
.tree-pane {
  flex: none;
  width: 471px;
  display: flex;
  overflow: hidden;
  background: #fff;
  border-left: 1px solid #828790;
}
.tree {
  flex: 1;
  list-style: none;
  margin: -14px 0 0;
  padding: 0;
  font: 12px/18px Roboto, "Open Sans", sans-serif;
}
.tree li { display: flex; align-items: center; height: 18px; white-space: nowrap; }
.tree span { padding: 0 4px; }
.tree .selected { background: #d9d9d9; }
.chev { width: 9px; height: 9px; }
.tree .chev { margin: 2px 8px 0 0; }
.ico { width: 16px; height: 16px; }
.l1 { padding-left: 26px; }
.l2 { padding-left: 45px; }
.l3 { padding-left: 64px; }
.l4 { padding-left: 83px; }
.tree-scroll { width: 16px; margin-right: 1px; background: #f0f0f0; padding-top: 356px; }
.tree-scroll .thumb { height: 100%; background: #cdcdcd; }
.splitter {
  flex: none;
  width: 6px;
  border-left: 1px solid #868686;
  border-right: 1px solid #696969;
}

/* toolbar */
.workbench { flex: 1; min-width: 0; display: flex; flex-direction: column; }
.toolbar {
  flex: none;
  height: 23px;
  margin-left: 3px;
  padding-bottom: 3px;
  display: flex;
  align-items: center;
  background: #ece9d8;
}
.tool { width: 23px; height: 20px; padding: 0 3px; border: 0; background: none; }
.tool svg { width: 16px; height: 16px; }
.sep { flex: none; width: 1px; height: 16px; margin: 0 2px 0 3px; background: #c5c2b0; }
.grip { flex: none; width: 2px; height: 16px; margin: 0 4px; border-left: 2px dotted #b8b5a2; }
.combo { display: flex; align-items: center; width: 122px; background: #fff; }
.combo select {
  flex: 1;
  height: 22px;
  padding: 0 4px;
  border: 0;
  appearance: none;
  background: none;
  font: 12px Roboto, "Open Sans", sans-serif;
}
.combo svg { width: 6px; height: 3px; margin-right: 4px; }
.caret { width: 8px; height: 4px; }

.panes { flex: 1; min-height: 0; display: flex; }

/* open documents */
.documents {
  flex: 1;
  min-width: 0;
  margin-left: 4px;
  padding: 0 2px 0 3px;
  display: flex;
  flex-direction: column;
  overflow: hidden;
  background: #f6f6f6;
  border: 1px solid #a0a0a0;
  border-bottom: 0;
}
.doc-tabs { display: flex; align-items: center; padding: 2px 5px 0 1px; background: #fff; }
.doc-tab {
  height: 16px;
  padding: 0 3px;
  margin-right: 4px;
  border: 0;
  background: none;
  font: 12px/16px "Open Sans", "Noto Sans", sans-serif;
}
.doc-tab.active { background: #2b579a; color: #fff; font-weight: bold; }
.doc-tabs .caret { margin-left: auto; }

.mdi {
  flex: 1;
  min-height: 0;
  margin-bottom: -7px;
  display: flex;
  flex-direction: column;
  padding: 0 8px 0 7px;
  border: 1px solid #000;
  border-radius: 7px 7px 0 0;
  background: linear-gradient(#99b4d1, #b9d1ea 30px, #b9d1ea 60px, #dce9f6 120px, #b9d1ea 121px);
  box-shadow: inset -1px 0 #5cc4dc;
}
.mdi-title { flex: none; height: 30px; display: flex; align-items: center; gap: 2px; padding: 0 2px 0 4px; }
.app-icon { width: 14px; height: 14px; margin: 4px auto 0 0; }
.win-btn {
  width: 32px;
  height: 18px;
  margin-top: 6px;
  padding: 0 9px;
  border: 1px solid #50667f;
  border-radius: 2px;
  background: linear-gradient(#c3d5e9, #b4cae2 50%, #98b2cf 50%, #b5cde8);
  box-shadow: inset 0 0 0 1px #d5e3f2;
}
.win-btn svg { width: 12px; height: 12px; }
.win-btn.close {
  border-color: #4a1210;
  background: linear-gradient(#e2a89c, #d88070 50%, #b8381e 50%, #d2725c);
  box-shadow: inset 0 0 0 1px #eab4a8;
}
.client { flex: 1; min-height: 0; display: grid; grid-template: 1fr 17px / 1fr 16px; }
.canvas {
  position: relative;
  overflow: hidden;
  background: #fff;
  border: 1px dashed #333;
  border-width: 1px 0 0 1px;
}

/* scrollbars */
.vscroll, .hscroll { display: flex; align-items: center; background: #f0f0f0; }
.vscroll { flex-direction: column; width: 16px; padding: 3px 0; justify-content: space-between; }
.vscroll svg, .hscroll svg { width: 10px; height: 10px; }
.vscroll .thumb { width: 100%; height: 149px; margin: 4px 0 auto; background: #cdcdcd; }
.vscroll.dark .thumb { height: 408px; background: #a6a6a6; }
.hscroll { padding: 0 3px; }
.hscroll .thumb { height: 100%; width: 86%; margin: 0 auto 0 4px; background: #cdcdcd; }
.flip { transform: rotate(180deg); }
.turn-left { transform: rotate(-90deg); }
.turn-right { transform: rotate(90deg); }
.corner { background: #f0f0f0; }

/* mask fields, placed freely on the canvas: --t is the title length, --w the field length */
.field { position: absolute; left: 39px; display: flex; --t: 106px; --w: 145px; }
.field label { flex: none; width: var(--t); padding-top: 3px; line-height: 16px; white-space: nowrap; }
.field input, .field textarea {
  width: var(--w);
  height: 20px;
  padding: 0 2px;
  border: 1px solid #7a7a7a;
  background: #f0f0f0;
  box-shadow: inset 0 0 0 1px #fff, -3px 0 #f0f0f0;
  outline: 0;
  resize: none;
}
.f-dokumenttyp { top: 45px; --w: 281px; }
.f-dokumenttitel { top: 68px; --w: 281px; }
.f-originalname { top: 91px; --w: 267px; }
.f-vorschau { left: 399px; top: 114px; --t: 70px; --w: 197px; }
.field.f-vorschau label, .field.f-dateidatum label { padding-top: 0; line-height: 14px; }
.f-vorschau textarea { height: 92px; }
.f-version { top: 137px; --w: 19px; }
.f-revision { top: 160px; --w: 19px; }
.f-extension { top: 183px; --w: 65px; }
.f-urersteller { top: 229px; }
.f-ersteller { top: 252px; }
.f-aenderer { top: 275px; }
.f-dateiaenderer { top: 299px; }
.f-sperrer { top: 323px; }
.f-wfstatus { top: 369px; }
.f-dateigroesse { top: 392px; }
.f-urerstelldatum, .f-erstelldatum, .f-aenderungsdatum, .f-dateidatum, .f-sperrdatum { left: 334px; --w: 80px; }
.f-urerstelldatum { top: 229px; }
.f-erstelldatum { top: 252px; }
.f-aenderungsdatum { top: 275px; }
.f-dateidatum { top: 299px; }
.f-sperrdatum { top: 323px; }
.f-dsid { left: 334px; top: 369px; --t: 127px; --w: 58px; }
.f-wfbenutzer { left: 341px; top: 415px; --t: 113px; --w: 80px; }
.f-wfdatum { left: 348px; top: 438px; --t: 91px; --w: 94px; }
.f-erpstatus { left: 579px; top: 415px; --t: 100px; --w: 75px; }
.f-erpmeld { left: 579px; top: 439px; --t: 100px; --w: 150px; }
.f-typ { top: 438px; --t: 26px; --w: 188px; }
.f-artikelnummer { left: 45px; top: 473px; --t: 100px; --w: 197px; }

.selection {
  position: absolute;
  left: 329px;
  top: 273px;
  width: 193px;
  height: 24px;
  border: 1px dotted #333;
  display: grid;
  grid-template-columns: repeat(3, 7px);
  justify-content: space-between;
  align-content: space-between;
}
.selection i {
  width: 7px;
  height: 7px;
  margin: -4px;
  border: 1px solid #000;
  border-radius: 2px;
  background: #fff;
}
.selection i:nth-child(3n) { margin: -4px 0 -4px 4px; }
.selection i:nth-child(3n+2) { margin: -4px 0; }

/* right side */
.side {
  flex: none;
  width: 604px;
  margin-left: 6px;
  padding-right: 1px;
  display: grid;
  grid-template-rows: 497fr 479fr;
  gap: 5px;
}
.panel { min-height: 0; display: flex; flex-direction: column; }
.panel-head { flex: none; height: 18px; display: flex; align-items: center; padding: 0 5px 0 2px; background: #f6f6f6; }
.panel-head h2 { flex: 1; font-weight: normal; }
.panel-head .pin { width: 10px; height: 10px; margin-left: 9px; }
.panel-body {
  flex: 1;
  min-height: 0;
  display: flex;
  flex-direction: column;
  padding: 2px;
  background: #fff;
  border: 1px solid #a0a0a0;
}
.panel.toolbox .panel-body { padding-bottom: 25px; }
.box-tabs { flex: none; display: flex; align-items: center; padding-right: 3px; }
.box-tab { height: 20px; padding: 0 6px; margin-right: 4px; border: 0; background: none; font: 12px Roboto, "Open Sans", sans-serif; }
.box-tab.active { background: #2b579a; color: #fff; font-weight: bold; }
.box-tabs .caret { margin-left: auto; }
.checks { flex: 1; min-height: 0; display: flex; margin: 6px 5px 0 2px; }
.check-list { flex: 1; overflow: hidden; }
.check-list h3 { display: flex; align-items: center; font-size: 12px; line-height: 16px; }
.check-list h3::before {
  content: "";
  margin: 0 4px 0 3px;
  border: 4px solid transparent;
  border-right-color: #333;
  border-bottom-color: #333;
}
.check-list label { display: flex; align-items: center; height: 16px; padding-left: 25px; }
.check-list input {
  appearance: none;
  display: grid;
  place-items: center;
  width: 13px;
  height: 13px;
  margin-right: 3px;
  border: 1px solid #333;
  background: #fff;
}
.check-list input:checked::before {
  content: "";
  width: 9px;
  height: 5px;
  margin-bottom: 3px;
  border: 1px solid #333;
  border-width: 0 0 1px 1px;
  transform: rotate(-45deg);
}
.box-buttons { flex: none; display: flex; gap: 8px; margin: 10px 2px 0; }
.push { height: 23px; padding: 0 8px; border: 1px solid #adadad; background: #e1e1e1; }
.push.wide { flex: 1; }

/* property grid */
.props { padding: 2px 0 0; }
.prop-tools { flex: none; height: 26px; display: flex; align-items: center; padding: 0 2px; background: #f0f0f0; }
.prop-tools button { display: flex; align-items: center; justify-content: center; width: 23px; height: 23px; padding: 0; border: 1px solid transparent; background: none; }
.prop-tools .on { background: #bfdcf4; border-color: #8fc3ee; }
.prop-tools svg { width: 16px; height: 16px; }
.prop-tools i { width: 1px; height: 20px; margin: 0 3px 0 2px; background: #808080; }
.az { display: flex; flex-direction: column; font-size: 10px; line-height: 9px; color: #2b4f9e; }
.az b + b { color: #a03040; }
.prop-tools .az-arrow { width: 5px; margin-left: 3px; }
.prop-grid { flex: 1; min-height: 0; overflow: hidden; padding-top: 1px; border: 1px solid #a0a0a0; border-left-color: #828790; }
.prop-grid table { width: 100%; table-layout: fixed; border-collapse: collapse; }
.c-gutter { width: 22px; }
.c-name { width: 252px; }
.prop-grid td, .prop-grid th { height: 16px; padding: 0 3px; line-height: 15px; text-align: left; border-bottom: 1px solid #f0f3f8; white-space: nowrap; }
.prop-grid td:first-child { padding: 0 0 0 5px; background: #f4f7fc; border-bottom: 0; }
.prop-grid td:nth-child(2) { border-right: 1px solid #f0f3f8; }
.prop-grid td:last-child, .prop-grid th { font-size: 12px; font-weight: bold; }
.prop-grid .sub td:nth-child(2) { padding-left: 24px; }
.prop-grid .cat th { background: #f4f7fc; }
.prop-help {
  flex: none;
  height: 42px;
  margin-top: 3px;
  padding: 2px 5px;
  background: #f0f0f0;
  border: 1px solid #a0a0a0;
  border-bottom: 0;
  font-size: 12px;
  font-weight: bold;
}
```
